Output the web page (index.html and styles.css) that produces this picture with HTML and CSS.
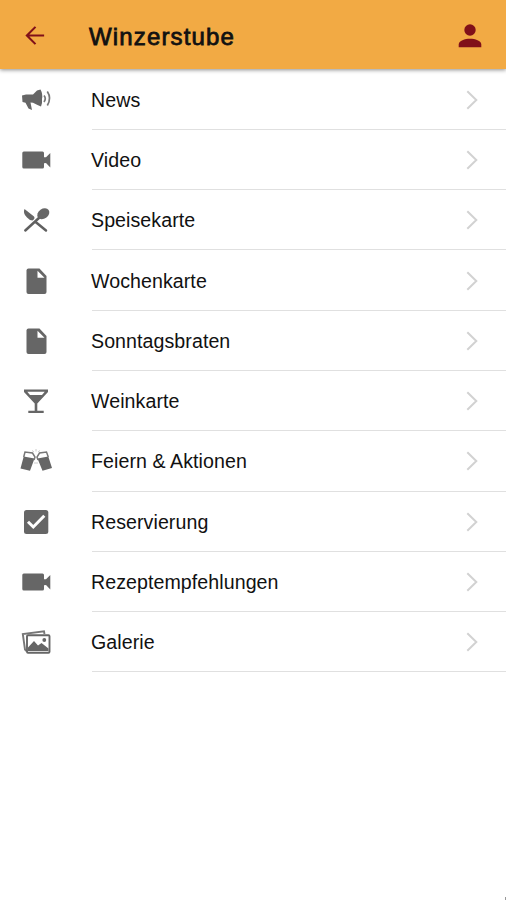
FILE: index.html
```html
<!DOCTYPE html>
<html lang="de">
<head>
<meta charset="utf-8">
<title>Winzerstube</title>
<link rel="stylesheet" href="styles.css">
</head>
<body>
<svg class="defs" width="0" height="0" aria-hidden="true">
  <symbol id="chevron" viewBox="0 0 12 20"><path d="M1.3 1.3 10.300 10 1.300 18.700" fill="none" stroke="#d2d2d2" stroke-width="2"/></symbol>
  <symbol id="video" viewBox="0 0 40 40"><path d="M7 11.500h19.500a1.500 1.500 0 0 1 1.500 1.500v4.300L30 17.300 34.300 13v14.500L30 23 28 23.200v3.800a1.500 1.500 0 0 1-1.500 1.500H7.800A1.500 1.500 0 0 1 6.300 27v-14A1.500 1.500 0 0 1 7.800 11.500z"/></symbol>
  <symbol id="file" viewBox="0 0 40 40"><path d="M12.500 7.500H23.500L30.500 15V31a2 2 0 0 1-2 2h-16a2 2 0 0 1-2-2V9.500a2 2 0 0 1 2-2z"/><path d="M21.500 9.800V16.800H28.500z" fill="#fff"/></symbol>
</svg>
<header class="bar">
  <svg class="back" viewBox="0 0 24 24"><path d="M21 12H3.500M12 3 3 12l9 9" fill="none" stroke="#801019" stroke-width="2.200"/></svg>
  <h1 class="title">Winzerstube</h1>
  <svg class="user" viewBox="0 0 24 24"><circle cx="12" cy="6" r="5.700"/><path d="M.7 23.300V20.500C.7 16.700 7 14.800 12 14.800S23.300 16.700 23.300 20.500V23.300z"/></svg>
</header>
<main class="list">
  <a class="row"><svg class="icon" viewBox="0 0 40 40"><path d="M6 15.500 10 14.500 17 14.500 21 10.500 24.500 9.500Q27 14 26 19Q26.500 23 25 26.500L21.500 25 17 22.800 14.500 22.500 16 30 12.500 28.500 9.500 22.800 6.500 22Z"/><path d="M28 15.500q2.500 3 0 6.500M31.300 11.500q4.500 6.500 0 14" fill="none" stroke="#777" stroke-width="1.700"/></svg><span class="label">News</span><svg class="go"><use href="#chevron"/></svg></a>
  <a class="row"><svg class="icon"><use href="#video"/></svg><span class="label">Video</span><svg class="go"><use href="#chevron"/></svg></a>
  <a class="row"><svg class="icon" viewBox="0 0 40 40"><path d="M9.300 30.500 24 17M19 21.500 30 30.500" fill="none" stroke="#606060" stroke-width="2.500" stroke-linecap="round"/><path d="M8.500 9 18 16.500Q19.500 18.500 16.500 20.500Q13 20 11 17.500Q6.500 13.500 8.500 9z"/><ellipse cx="27.300" cy="13.700" rx="6.500" ry="4.900" transform="rotate(-35 27.300 13.700)"/></svg><span class="label">Speisekarte</span><svg class="go"><use href="#chevron"/></svg></a>
  <a class="row"><svg class="icon"><use href="#file"/></svg><span class="label">Wochenkarte</span><svg class="go"><use href="#chevron"/></svg></a>
  <a class="row"><svg class="icon"><use href="#file"/></svg><span class="label">Sonntagsbraten</span><svg class="go"><use href="#chevron"/></svg></a>
  <a class="row"><svg class="icon" viewBox="0 0 40 40"><path d="M8 8.500H32V11L21.300 22.500V29.700H27.700V32H12.300V29.700H18.700V22.500L8 11z"/><path d="M11.300 10.800H28.700L26 14H14z" fill="#fff"/></svg><span class="label">Weinkarte</span><svg class="go"><use href="#chevron"/></svg></a>
  <a class="row"><svg class="icon" viewBox="0 0 40 40"><path d="M7.700 15.500 18.500 17.500 14 29.800 4.500 27.500zM32.300 15.500 21.500 17.500 26.500 29.800 36 27z"/><path d="M7.700 16 9 11 16.500 12 19 16 18 19M32.300 16 30.500 11 23.500 12 21 16 22 19" fill="none" stroke="#777" stroke-width="1.500"/><path d="M16 9.500 18 11M20 8V10.500M24 9.500 22 11M18 22h4" fill="none" stroke="#ccc"/></svg><span class="label">Feiern &amp; Aktionen</span><svg class="go"><use href="#chevron"/></svg></a>
  <a class="row"><svg class="icon" viewBox="0 0 40 40"><rect x="8" y="8" width="24.300" height="24" rx="2.500"/><path d="M12 19.800 17.300 25 28.300 13.800" fill="none" stroke="#fff" stroke-width="3"/></svg><span class="label">Reservierung</span><svg class="go"><use href="#chevron"/></svg></a>
  <a class="row"><svg class="icon"><use href="#video"/></svg><span class="label">Rezeptempfehlungen</span><svg class="go"><use href="#chevron"/></svg></a>
  <a class="row"><svg class="icon" viewBox="0 0 40 40"><path d="M10.500 29 9 27.500 6.800 12 28 9.300 28.500 12" fill="none" stroke="#777" stroke-width="1.900"/><rect x="11" y="13.300" width="22.500" height="17.500" rx="1" fill="#fff" stroke="#666" stroke-width="1.900"/><path d="M12 29V25.500L18 19 22 23.500 25.500 21 32.500 26.500V29z"/><circle cx="28.300" cy="18" r="1.900"/></svg><span class="label">Galerie</span><svg class="go"><use href="#chevron"/></svg></a>
</main>
<span class="corner"></span>
</body>
</html>
```
FILE: styles.css
```css
* { box-sizing: border-box; }
body {
  margin: 0;
  position: relative;
  min-height: 100vh;
  background: #fff;
  color: #111;
  font-family: "Liberation Sans", Arial, sans-serif;
}
.defs { display: block; }
.bar {
  display: flex;
  align-items: center;
  height: 69px;
  padding: 2px 24px 0;
  background: #f2aa44;
  box-shadow: 0 1px 4px rgba(0, 0, 0, .45);
}
.back { width: 23px; height: 23px; }
.title {
  flex: 1;
  margin: 2px 0 0 42px;
  font-size: 24px;
  line-height: 30px;
  font-weight: 400;
  letter-spacing: 1.15px;
  -webkit-text-stroke: .8px #111;
}
.user { width: 24px; height: 24px; fill: #801019; }
.list { padding-top: .5px; }
.row {
  display: grid;
  grid-template-columns: 76px 1fr 52px;
  align-items: center;
  height: 60.3px;
  padding-left: 16px;
  background: linear-gradient(#e0e0e0, #e0e0e0) 92px 100% / 100% 1px no-repeat;
}
.icon { width: 40px; height: 40px; fill: #666; }
.label {
  font-size: 19.600px;
  line-height: 28px;
  letter-spacing: .07px;
  margin-left: -1px;
}
.go { width: 12px; height: 20px; margin-left: 12px; }
.corner {
  position: absolute;
  right: 0;
  bottom: 0;
  width: 1px;
  height: 3px;
  background: #999;
}
```
